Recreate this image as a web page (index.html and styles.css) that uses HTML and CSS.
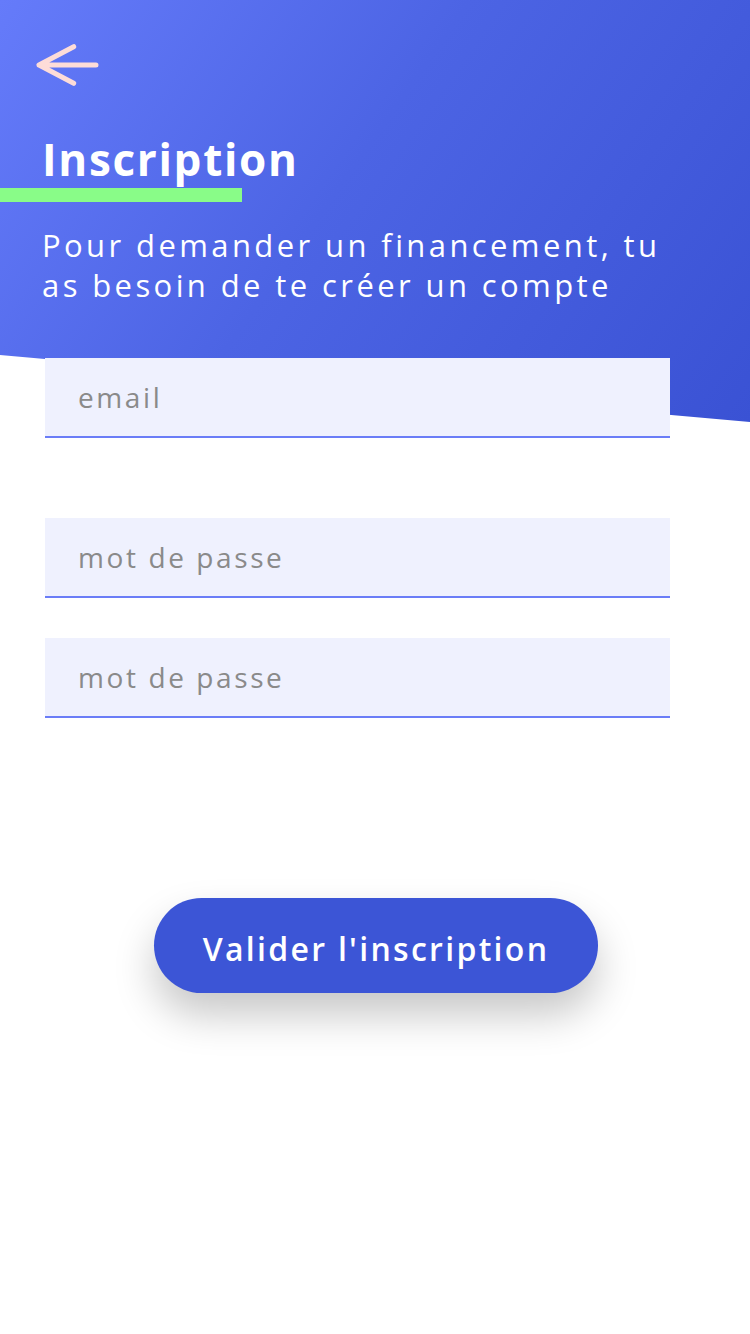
FILE: index.html
```html
<!DOCTYPE html>
<html lang="fr">
<head>
<meta charset="utf-8">
<title>Inscription</title>
<link rel="stylesheet" href="styles.css">
</head>
<body>
<div class="page">
  <header class="hero">
    <button class="back" aria-label="Retour">
      <svg width="64" height="46" viewBox="0 0 64 46">
        <path d="M4 23 H61 M38.7 4.7 L4 23 L38.7 41.3" fill="none" stroke="#fddcd8" stroke-width="5" stroke-linecap="round" stroke-linejoin="round"/>
      </svg>
    </button>
    <h1 class="title">Inscription</h1>
    <div class="title-bar"></div>
    <p class="subtitle">Pour demander un financement, tu as besoin de te créer un compte</p>
  </header>
  <form class="form">
    <input class="field" type="email" placeholder="email">
    <input class="field field-gap" type="password" placeholder="mot de passe">
    <input class="field field-tight" type="password" placeholder="mot de passe">
    <button type="button" class="submit">Valider l'inscription</button>
  </form>
</div>
</body>
</html>
```

FILE: styles.css
```css
* { box-sizing: border-box; }
html, body { margin: 0; padding: 0; }
body {
  width: 750px;
  height: 1334px;
  background: #ffffff;
  font-family: "Open Sans", "DejaVu Sans", sans-serif;
  overflow: hidden;
}
.page { width: 750px; }
.hero {
  height: 422px;
  background: linear-gradient(125deg, #657bfa 0%, #4c64e4 45%, #3a52d4 100%);
  clip-path: polygon(0 0, 100% 0, 100% 422px, 0 355px);
  padding-top: 42px;
  display: flex;
  flex-direction: column;
}
.back {
  margin: 0 0 0 35px;
  padding: 0;
  border: 0;
  background: none;
  width: 64px;
  height: 46px;
  display: block;
}
.back svg { display: block; }
.title {
  margin: 41px 0 0 42px;
  font-size: 44px;
  line-height: 60px;
  font-weight: 700;
  color: #ffffff;
  letter-spacing: 1.7px;
}
.title-bar {
  width: 242px;
  height: 14px;
  background: #89fc88;
  margin-top: -1px;
}
.subtitle {
  margin: 23px 0 0 42px;
  width: 660px;
  font-size: 31px;
  line-height: 40px;
  font-weight: 400;
  color: #ffffff;
  letter-spacing: 3.4px;
}
.form {
  position: relative;
  margin-top: -64px;
  display: flex;
  flex-direction: column;
  align-items: flex-start;
}
.field {
  display: block;
  margin: 0 0 0 45px;
  width: 625px;
  height: 80px;
  border: 0;
  border-bottom: 2px solid #6a7df7;
  background: #eff1fe;
  padding: 0 0 0 33px;
  font-family: inherit;
  font-size: 28px;
  letter-spacing: 2.6px;
  color: #333;
  outline: none;
}
.field::placeholder { color: #8a8a8a; opacity: 1; }
.field-gap { margin-top: 80px; }
.field-tight { margin-top: 40px; }
.submit {
  align-self: center;
  margin: 180px 0 0 2px;
  width: 444px;
  height: 95px;
  border: 0;
  border-radius: 48px;
  background: #3c55d6;
  color: #ffffff;
  font-family: inherit;
  font-size: 32px;
  font-weight: 600;
  letter-spacing: 2.3px;
  box-shadow: 0 22px 40px rgba(0, 0, 0, 0.22);
  padding: 5px 0 0 0;
}
```
